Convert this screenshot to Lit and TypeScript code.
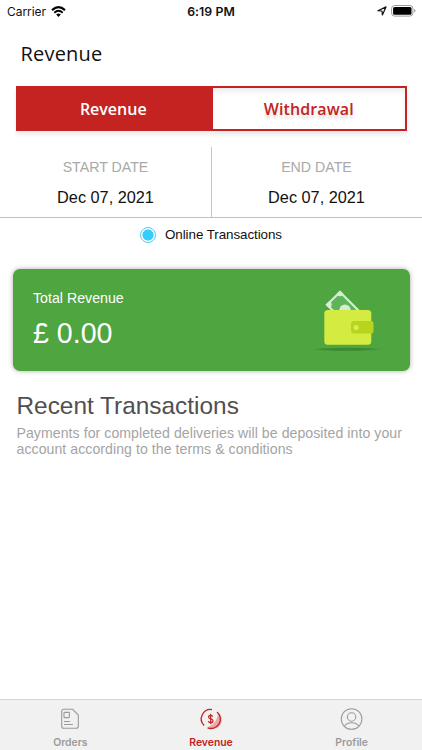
import { LitElement, html, css, svg } from "lit";
import { customElement, property } from "lit/decorators.js";

@customElement("status-bar")
class StatusBar extends LitElement {
  static styles = css`
    :host { display: grid; grid-template-columns: 1fr auto 1fr; align-items: center; height: 22px; padding: 0 6px 0 7px; font-family: Inter, sans-serif; color: #111; box-sizing: border-box; }
    .left { display: flex; align-items: center; gap: 5px; font-size: 12px; letter-spacing: -0.05px; }
    .time { font-size: 12.3px; font-weight: 600; letter-spacing: 0.05px; margin-right: 1px; }
    .right { display: flex; align-items: center; justify-content: flex-end; gap: 4px; }
    svg { display: block; }
  `;
  render() {
    return html`
      <div class="left"><span>Carrier</span>
        <svg width="15" height="11" viewBox="0 0 15 11" fill="none" stroke="#000">
          <path d="M1 4.1Q7.5-1.7 14 4.1" stroke-width="2.1"/>
          <path d="M3.3 6.7Q7.5 3 11.7 6.7" stroke-width="1.9"/>
          <path d="M5.2 8.5Q7.5 6.6 9.8 8.5L7.5 10.9Z" fill="#000" stroke="none"/>
        </svg>
      </div>
      <div class="time">6:19 PM</div>
      <div class="right">
        <svg width="10" height="10" viewBox="0 0 10 10"><path d="M.9 4.7 9 .9 5.4 9 5 5Z" fill="none" stroke="#111" stroke-width="1.2" stroke-linejoin="round"/></svg>
        <svg width="25" height="12" viewBox="0 0 25 12">
          <rect x=".6" y=".5" width="21.3" height="10.6" rx="3" fill="none" stroke="#999"/>
          <rect x="2.1" y="2" width="18.4" height="7.7" rx="1.5"/>
          <path d="M23.2 4v3.6q1.3-.5 1.3-1.8T23.2 4Z" fill="#999"/>
        </svg>
      </div>`;
  }
}

@customElement("date-cell")
class DateCell extends LitElement {
  @property() label = "";
  @property() value = "";
  static styles = css`
    :host { display: flex; flex-direction: column; align-items: center; padding-top: 11px; }
    .label { font-size: 14.2px; line-height: 18px; color: #a9a9a9; }
    .value { font-size: 16.3px; line-height: 20px; margin-top: 11px; color: #111; }
  `;
  render() {
    return html`<span class="label">${this.label}</span><span class="value">${this.value}</span>`;
  }
}

const icons = {
  orders: svg`
    <path d="M4.7 1.3h8.9L19.3 7v11.3a2 2 0 0 1-2 2H4.7a2 2 0 0 1-2-2V3.3a2 2 0 0 1 2-2Z"/>
    <rect x="5" y="4.4" width="5.4" height="5.2" rx=".6"/>
    <path d="M5 13.5h6M5 16.5h9"/>`,
  revenue: svg`
    <path d="M18 4.2A9 9 0 0 1 7.6 19.2 15 15 0 0 0 18 4.2Z" fill="#eaa9a9" stroke="none"/>
    <path d="M12 1.6A9.3 9.3 0 0 0 4.2 17.5M17 4A9.3 9.3 0 0 1 7.6 19.8" stroke-width="1.3"/>
    <path d="M12.8 8.6Q12.4 7.3 10.7 7.3 8.6 7.3 8.6 9 8.6 10.5 10.7 10.9 13 11.3 13 13 13 14.7 10.7 14.7 8.6 14.7 8.3 13.2M10.7 5.7V16.3" stroke-width="1.2"/>`,
  profile: svg`
    <circle cx="10.6" cy="11" r="10.3"/><circle cx="10.6" cy="9" r="4.2"/>
    <path d="M3.4 18Q5.8 14.8 10.6 14.8T17.8 18"/>`,
};

@customElement("nav-item")
class NavItem extends LitElement {
  @property() label = "";
  @property() icon: keyof typeof icons = "orders";
  @property({ type: Boolean, reflect: true }) active = false;
  static styles = css`
    :host { display: flex; flex-direction: column; align-items: center; padding-top: 8px; color: #9b9b9b; font: 600 10.4px/14px Inter, sans-serif; letter-spacing: 0; }
    :host([active]) { color: #c42323; }
    svg { display: block; margin-bottom: 6px; fill: none; stroke: currentColor; stroke-width: 1.1; overflow: visible; }
  `;
  render() {
    return html`<svg width="22" height="22" viewBox="0 0 22 22">${icons[this.icon]}</svg><span>${this.label}</span>`;
  }
}

@customElement("app-root")
class AppRoot extends LitElement {
  static styles = css`
    :host { display: flex; flex-direction: column; height: 750px; background: #fff; overflow: hidden; font-family: "Liberation Sans", Arial, sans-serif; }
    h1 { margin: 18px 0 0 20.5px; font: 400 20px/28px "Open Sans", sans-serif; letter-spacing: 0.2px; color: #111; }
    .tabs { display: grid; grid-template-columns: 195.5px 1fr; height: 45px; box-sizing: border-box; margin: 18px 15.5px 0; border: 2px solid #c52222; box-shadow: 0 4px 4px #00000014, inset 0 4px 4px #00000010; font: 600 16px/42px "Open Sans", sans-serif; text-align: center; }
    .tab { color: #c52222; letter-spacing: 0.1px; text-shadow: 0 4px 3px #00000020; }
    .tab.on { background: #c52222; color: #fff; text-shadow: none; letter-spacing: 0; padding-right: 4px; }
    .dates { display: grid; grid-template-columns: 1fr 1fr; height: 70px; margin-top: 16px; border-bottom: 1px solid #c0c0c0; }
    .dates date-cell + date-cell { border-left: 1px solid #c6c6c6; margin-left: -0.5px; padding-right: 0.5px; }
    .option { display: flex; align-items: center; justify-content: center; gap: 9px; height: 34px; font-size: 13.4px; letter-spacing: -0.07px; color: #111; }
    .option .text { line-height: 14px; }
    .radio { width: 14px; height: 14px; border: 1px solid #49cdf6; border-radius: 50%; background: radial-gradient(circle, #36cdfa 5.2px, #fff 5.9px); margin-bottom: 1px; }
    .card { display: flex; justify-content: space-between; height: 102px; margin: 17px 12.5px 0; border-radius: 7px; background: #4fa540; color: #fff; box-shadow: 0 0 5px #0005; }
    .copy { padding: 20px 0 0 20.5px; }
    .caption { font-size: 14.2px; line-height: 18px; }
    .amount { font-size: 28.6px; line-height: 34px; margin-top: 9px; }
    .wallet { display: block; margin: 18px 26px 0 0; }
    h2 { margin: 20px 0 0 16.5px; font-size: 24.4px; line-height: 30px; font-weight: 400; color: #505050; }
    p { margin: 4px 0 0 16.5px; font-size: 14.1px; letter-spacing: 0.065px; line-height: 16px; color: #a4a4a4; white-space: nowrap; }
    nav { display: grid; grid-template-columns: repeat(3, 1fr); height: 51px; box-sizing: border-box; margin-top: auto; border-top: 1px solid #d3d3d3; background: #f1f1f1; }
  `;
  render() {
    return html`
      <status-bar></status-bar>
      <h1>Revenue</h1>
      <div class="tabs"><div class="tab on">Revenue</div><div class="tab">Withdrawal</div></div>
      <div class="dates">
        <date-cell label="START DATE" value="Dec 07, 2021"></date-cell>
        <date-cell label="END DATE" value="Dec 07, 2021"></date-cell>
      </div>
      <div class="option"><span class="radio"></span><span class="text">Online Transactions</span></div>
      <section class="card">
        <div class="copy"><div class="caption">Total Revenue</div><div class="amount">£ 0.00</div></div>
        <svg class="wallet" width="70" height="68" viewBox="0 0 70 68">
          <defs>
            <filter id="soft" x="-20%" y="-200%" width="140%" height="500%"><feGaussianBlur stdDeviation="3 .7"/></filter>
            <clipPath id="note"><path d="M11.5 17.7 26 3.6 54 31.6 40 45.7Z"/></clipPath>
          </defs>
          <ellipse cx="33" cy="62.3" rx="30" ry="1.5" fill="#3a8932" filter="url(#soft)"/>
          <path d="M11.5 17.7 26 3.6 54 31.6 40 45.7Z" fill="#d5ecd2"/>
          <path d="M14.5 17.7 26 6.6 51 31.6 40 42.7Z" fill="#5db557"/>
          <g clip-path="url(#note)" fill="#d5ecd2"><circle cx="26" cy="5" r="4.2"/><circle cx="13.5" cy="17.7" r="4.2"/><circle cx="31" cy="23.3" r="5.8"/></g>
          <rect x="10.3" y="23" width="47" height="34.8" rx="3.5" fill="#d4ec41"/>
          <path d="M40.4 34H57a2.5 2.5 0 0 1 2.5 2.5v7.6a2.5 2.5 0 0 1-2.5 2.5H40.4a3.4 3.4 0 0 1-3.4-3.4v-5.8a3.4 3.4 0 0 1 3.4-3.4Z" fill="#b8d51e"/>
          <circle cx="42.2" cy="40.5" r="2.6" fill="#d8ee54"/>
        </svg>
      </section>
      <h2>Recent Transactions</h2>
      <p>Payments for completed deliveries will be deposited into your<br>account according to the terms &amp; conditions</p>
      <nav>
        <nav-item label="Orders" icon="orders"></nav-item>
        <nav-item label="Revenue" icon="revenue" active></nav-item>
        <nav-item label="Profile" icon="profile"></nav-item>
      </nav>`;
  }
}
